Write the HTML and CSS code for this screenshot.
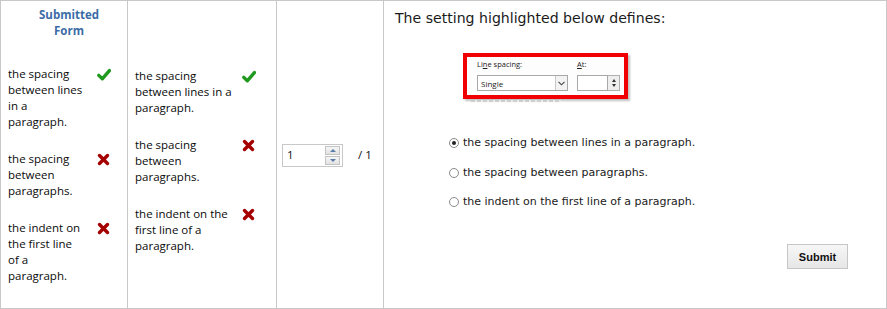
FILE: index.html
```html
<!DOCTYPE html>
<html>
<head>
<meta charset="utf-8">
<link rel="stylesheet" href="styles.css">
</head>
<body>
<div class="frame">
  <div class="col col-submitted">
    <div class="col-head">Submitted<br>Form</div>
    <div class="items items-1">
      <div class="item">
        <div class="item-text">the spacing between lines in a paragraph.</div>
        <svg class="icon" width="14" height="14" viewBox="0 0 14 14"><path class="tick" d="M1.8 7.4 L5.3 10.8 L12.4 2.6"/></svg>
      </div>
      <div class="item">
        <div class="item-text">the spacing between paragraphs.</div>
        <svg class="icon" width="14" height="14" viewBox="0 0 14 14"><path class="cross" d="M2.5 2.5 L10.5 10.5 M10.5 2.5 L2.5 10.5"/></svg>
      </div>
      <div class="item">
        <div class="item-text">the indent on the first line of a paragraph.</div>
        <svg class="icon" width="14" height="14" viewBox="0 0 14 14"><path class="cross" d="M2.5 2.5 L10.5 10.5 M10.5 2.5 L2.5 10.5"/></svg>
      </div>
    </div>
  </div>
  <div class="col col-correct">
    <div class="items items-2">
      <div class="item">
        <div class="item-text">the spacing between lines in a paragraph.</div>
        <svg class="icon" width="14" height="14" viewBox="0 0 14 14"><path class="tick" d="M1.8 7.4 L5.3 10.8 L12.4 2.6"/></svg>
      </div>
      <div class="item">
        <div class="item-text">the spacing between paragraphs.</div>
        <svg class="icon" width="14" height="14" viewBox="0 0 14 14"><path class="cross" d="M2.5 2.5 L10.5 10.5 M10.5 2.5 L2.5 10.5"/></svg>
      </div>
      <div class="item">
        <div class="item-text">the indent on the first line of a paragraph.</div>
        <svg class="icon" width="14" height="14" viewBox="0 0 14 14"><path class="cross" d="M2.5 2.5 L10.5 10.5 M10.5 2.5 L2.5 10.5"/></svg>
      </div>
    </div>
  </div>
  <div class="col col-score">
    <div class="spin-input">
      <span class="spin-value">1</span>
      <div class="spin-buttons">
        <span class="spin-btn"><span class="tri-up"></span></span>
        <span class="spin-btn"><span class="tri-down"></span></span>
      </div>
    </div>
    <span class="score-total">/ 1</span>
  </div>
  <div class="col col-question">
    <div class="q-title">The setting highlighted below defines:</div>
    <div class="shot">
      <div class="shot-box">
        <div class="shot-group shot-group-main">
          <div class="shot-label">Li<u>n</u>e spacing:</div>
          <div class="shot-select"><span class="shot-select-text">Single</span><span class="shot-arrow"><svg width="7" height="5" viewBox="0 0 7 5"><path d="M0.5 0.8 L3.5 3.8 L6.5 0.8" fill="none" stroke="#444" stroke-width="1.1"/></svg></span></div>
        </div>
        <div class="shot-group">
          <div class="shot-label"><u>A</u>t:</div>
          <div class="shot-spin"><span class="shot-spin-field"></span><span class="shot-spin-btns"><span class="mini-up"></span><span class="mini-down"></span></span></div>
        </div>
      </div>
      <div class="shot-under"></div>
    </div>
    <div class="options">
      <div class="option"><span class="radio checked"></span><span>the spacing between lines in a paragraph.</span></div>
      <div class="option"><span class="radio"></span><span>the spacing between paragraphs.</span></div>
      <div class="option"><span class="radio"></span><span>the indent on the first line of a paragraph.</span></div>
    </div>
    <div class="actions"><button class="submit">Submit</button></div>
  </div>
</div>
</body>
</html>
```

FILE: styles.css
```css
* { box-sizing: border-box; }
html, body { margin: 0; padding: 0; background: #fff; }
body { width: 887px; height: 309px; overflow: hidden; }

.frame {
  width: 887px;
  height: 309px;
  border: 1px solid #c8c8c8;
  display: grid;
  grid-template-columns: 127px 149px 107px 1fr;
  font-family: "Open Sans", "Noto Sans", sans-serif;
  color: #111;
}
.col { border-right: 1px solid #c8c8c8; }
.col-question { border-right: none; }

.col-head {
  padding: 6px 0 0 10px;
  text-align: center;
  font-weight: bold;
  font-size: 11.5px;
  line-height: 16px;
  color: #3c6ca6;
}

.items { display: flex; flex-direction: column; gap: 21px; }
.items-1 { padding: 27px 0 0 7px; }
.items-2 { padding: 67px 0 0 7px; }
.item { display: flex; align-items: flex-start; }
.item-text { font-size: 11.5px; line-height: 16px; color: #0a0a0a; }
.items-1 .item-text { width: 76px; margin-right: 13px; }
.items-2 .item-text { width: 100px; margin-right: 7px; }
.icon { margin-top: 2px; flex: none; }
.tick { fill: none; stroke: #1f9a1f; stroke-width: 3.4; stroke-linecap: round; stroke-linejoin: round; }
.cross { fill: none; stroke: #a40000; stroke-width: 3.4; stroke-linecap: round; }

.col-score {
  display: flex;
  align-items: center;
  padding-left: 5px;
  padding-top: 1px;
}
.spin-input {
  width: 61px;
  height: 23px;
  border: 1px solid #c8c8c8;
  display: flex;
  align-items: center;
  justify-content: space-between;
  padding: 0 2px 0 4px;
}
.spin-value { font-size: 11.5px; line-height: 16px; }
.spin-buttons { display: flex; flex-direction: column; gap: 1px; }
.spin-btn {
  width: 15px;
  height: 9px;
  border: 1px solid #c4c4c4;
  background: linear-gradient(#f6f6f6, #e2e2e2);
  display: flex;
  align-items: center;
  justify-content: center;
}
.tri-up { width: 0; height: 0; border-left: 3px solid transparent; border-right: 3px solid transparent; border-bottom: 3px solid #5c7ea6; }
.tri-down { width: 0; height: 0; border-left: 3px solid transparent; border-right: 3px solid transparent; border-top: 3px solid #5c7ea6; }
.score-total { margin-left: 15px; font-size: 11.5px; line-height: 16px; }

.col-question { display: flex; flex-direction: column; padding-top: 8px; }
.q-title {
  padding-left: 11px;
  font-family: "DejaVu Sans", Verdana, sans-serif;
  font-size: 14.1px;
  line-height: 18px;
  color: #1a1a1a;
}
.shot { margin: 26px 0 0 79px; width: 170px; }
.shot-box {
  width: 165px;
  height: 46px;
  border: 4px solid #f00000;
  background: #fdfdfd;
  box-shadow: 2px 2px 2px rgba(0,0,0,0.25);
  display: flex;
  gap: 9px;
  padding: 2px 0 0 10px;
  font-family: "Open Sans", sans-serif;
  font-size: 7.5px;
  color: #222;
}
.shot-group { display: flex; flex-direction: column; gap: 5px; }
.shot-label { line-height: 11px; }
.shot-label u { text-decoration-thickness: 1px; }
.shot-select {
  width: 91px;
  height: 16px;
  border: 1px solid #a8a8a8;
  background: #fff;
  display: flex;
  align-items: center;
  justify-content: space-between;
}
.shot-select-text { padding-left: 3px; font-size: 8px; }
.shot-arrow {
  width: 12px;
  height: 14px;
  border-left: 1px solid #c8c8c8;
  background: #f3f3f3;
  display: flex;
  align-items: center;
  justify-content: center;
}
.shot-spin { display: flex; height: 16px; }
.shot-spin-field { width: 31px; border: 1px solid #a8a8a8; background: #fff; }
.shot-spin-btns {
  width: 12px;
  border: 1px solid #b0b0b0;
  border-left: none;
  background: #eee;
  display: flex;
  flex-direction: column;
  align-items: center;
  justify-content: center;
  gap: 2px;
}
.mini-up { width: 0; height: 0; border-left: 2.5px solid transparent; border-right: 2.5px solid transparent; border-bottom: 3px solid #333; }
.mini-down { width: 0; height: 0; border-left: 2.5px solid transparent; border-right: 2.5px solid transparent; border-top: 3px solid #333; }
.shot-under { margin: 1px 0 0 8px; width: 90px; height: 2px; background: repeating-linear-gradient(90deg, #c9c9c9 0 4px, #eee 4px 6px); opacity: 0.8; }

.options {
  margin: 33px 0 0 65px;
  display: flex;
  flex-direction: column;
  gap: 13.5px;
  font-family: "DejaVu Sans", Verdana, sans-serif;
  font-size: 11px;
  line-height: 16px;
  color: #1a1a1a;
}
.option { display: flex; align-items: center; gap: 4px; }
.radio {
  width: 10px;
  height: 10px;
  border-radius: 50%;
  border: 1px solid #8a8a8a;
  background: #fff;
  display: flex;
  align-items: center;
  justify-content: center;
  flex: none;
}
.radio.checked::after { content: ""; width: 4px; height: 4px; border-radius: 50%; background: #222; }

.actions { display: flex; justify-content: flex-end; padding-right: 38px; margin-top: 34px; }
.submit {
  width: 61px;
  height: 25px;
  border: 1px solid #c6c6c6;
  background: linear-gradient(#f7f7f7, #e6e6e6);
  font-family: "Liberation Sans", Arial, sans-serif;
  font-weight: bold;
  font-size: 11px;
  color: #111;
  padding: 0;
}
```
